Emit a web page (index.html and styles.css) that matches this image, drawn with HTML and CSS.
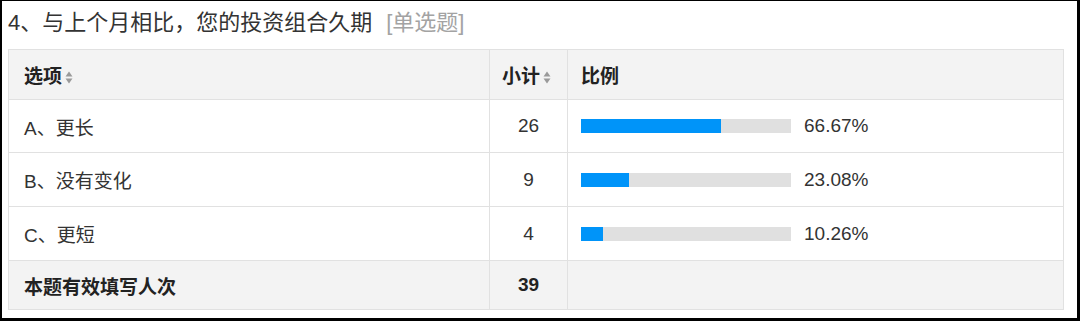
FILE: index.html
```html
<!DOCTYPE html>
<html lang="zh-CN">
<head>
<meta charset="utf-8">
<title>投资组合久期</title>
<link rel="stylesheet" href="styles.css">
</head>
<body>
<div class="frame">
  <div class="title">4、与上个月相比，您的投资组合久期<span class="type">[单选题]</span></div>
  <table class="result">
    <colgroup>
      <col class="c-opt">
      <col class="c-cnt">
      <col class="c-pct">
    </colgroup>
    <thead>
      <tr>
        <th class="opt">选项<span class="sort"><svg width="8" height="13" viewBox="0 0 8 13"><path d="M4 0.5 L7.5 5.5 H0.5 Z" fill="#9a9a9a"/><path d="M4 12.5 L7.5 7.5 H0.5 Z" fill="#9a9a9a"/></svg></span></th>
        <th class="cnt">小计<span class="sort"><svg width="8" height="13" viewBox="0 0 8 13"><path d="M4 0.5 L7.5 5.5 H0.5 Z" fill="#9a9a9a"/><path d="M4 12.5 L7.5 7.5 H0.5 Z" fill="#9a9a9a"/></svg></span></th>
        <th class="pct">比例</th>
      </tr>
    </thead>
    <tbody>
      <tr class="r1">
        <td class="opt">A、更长</td>
        <td class="cnt">26</td>
        <td class="pct"><div class="bar-wrap"><div class="bar"><div class="fill" style="width:66.67%"></div></div><span class="pv">66.67%</span></div></td>
      </tr>
      <tr class="r2">
        <td class="opt">B、没有变化</td>
        <td class="cnt">9</td>
        <td class="pct"><div class="bar-wrap"><div class="bar"><div class="fill" style="width:23.08%"></div></div><span class="pv">23.08%</span></div></td>
      </tr>
      <tr class="r2">
        <td class="opt">C、更短</td>
        <td class="cnt">4</td>
        <td class="pct"><div class="bar-wrap"><div class="bar"><div class="fill" style="width:10.26%"></div></div><span class="pv">10.26%</span></div></td>
      </tr>
    </tbody>
    <tfoot>
      <tr>
        <td class="opt">本题有效填写人次</td>
        <td class="cnt">39</td>
        <td class="pct"></td>
      </tr>
    </tfoot>
  </table>
</div>
</body>
</html>
```
FILE: styles.css
```css
html, body {
  margin: 0;
  padding: 0;
  background: #fff;
}
body {
  font-family: "Liberation Sans", "Noto Sans CJK SC", sans-serif;
  color: #333;
}
.frame {
  box-sizing: border-box;
  width: 1080px;
  height: 321px;
  border-style: solid;
  border-color: #000;
  border-width: 1px 3px 3px 2px;
  padding: 0 0 0 6px;
}
.title {
  height: 48px;
  line-height: 44px;
  font-size: 22px;
  color: #333;
  white-space: nowrap;
}
.type {
  margin-left: 14px;
  color: #a3a3a3;
}
.result {
  border-collapse: collapse;
  width: 1055px;
  table-layout: fixed;
  font-size: 19px;
}
.c-opt { width: 481px; }
.c-cnt { width: 78px; }
.c-pct { width: 496px; }
.result th,
.result td {
  border: 1px solid #e1e1e1;
  padding: 0;
}
.result thead th {
  background: #f3f3f3;
  height: 49px;
  font-weight: bold;
  text-align: left;
  color: #222;
}
.result tfoot td {
  background: #f3f3f3;
  height: 48px;
  font-weight: bold;
  color: #222;
}
.result tbody tr.r1 td { height: 52px; }
.result tbody tr.r2 td { height: 53px; }
.opt {
  padding-left: 15px !important;
}
.cnt {
  text-align: center;
}
.result thead th.cnt {
  text-align: center;
  padding-right: 4px;
}
.pct {
  padding-left: 13px !important;
}
.sort {
  display: inline-block;
  margin-left: 3px;
  vertical-align: -1px;
}
.sort svg { display: block; }
.bar-wrap {
  display: flex;
  align-items: center;
  gap: 13px;
}
.bar {
  width: 210px;
  height: 14px;
  background: #e0e0e0;
}
.fill {
  height: 100%;
  background: #0094f9;
}
.pv {
  color: #333;
}
```
